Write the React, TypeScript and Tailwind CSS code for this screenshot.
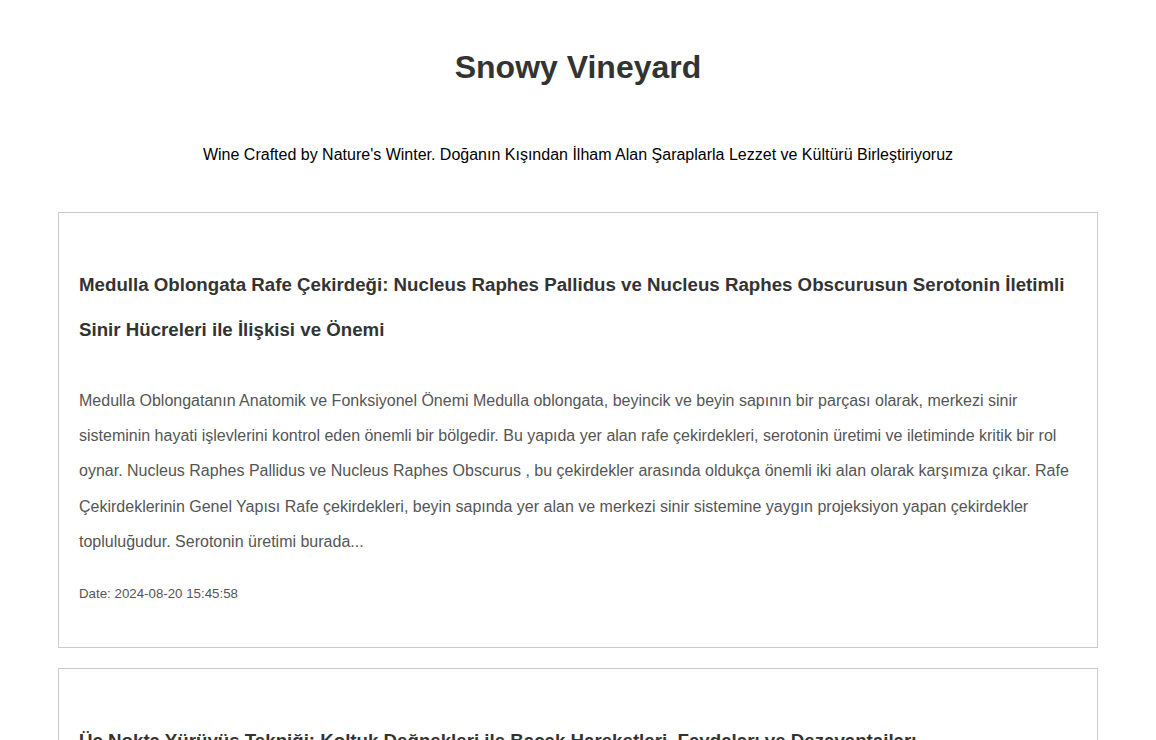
import React from "react";

const posts = [
  {
    title:
      "Medulla Oblongata Rafe Çekirdeği: Nucleus Raphes Pallidus ve Nucleus Raphes Obscurusun Serotonin İletimli Sinir Hücreleri ile İlişkisi ve Önemi",
    body:
      "Medulla Oblongatanın Anatomik ve Fonksiyonel Önemi Medulla oblongata, beyincik ve beyin sapının bir parçası olarak, merkezi sinir sisteminin hayati işlevlerini kontrol eden önemli bir bölgedir. Bu yapıda yer alan rafe çekirdekleri, serotonin üretimi ve iletiminde kritik bir rol oynar. Nucleus Raphes Pallidus ve Nucleus Raphes Obscurus , bu çekirdekler arasında oldukça önemli iki alan olarak karşımıza çıkar. Rafe Çekirdeklerinin Genel Yapısı Rafe çekirdekleri, beyin sapında yer alan ve merkezi sinir sistemine yaygın projeksiyon yapan çekirdekler topluluğudur. Serotonin üretimi burada...",
    date: "2024-08-20 15:45:58",
  },
  {
    title:
      "Üç Nokta Yürüyüş Tekniği: Koltuk Değnekleri ile Bacak Hareketleri, Faydaları ve Dezavantajları",
    body:
      "Üç nokta yürüyüş tekniği, koltuk değnekleri kullanılarak yapılan ve bir bacağın yük taşımasının kısıtlandığı durumlarda tercih edilen bir yürüyüş yöntemidir. Bu teknikte iki koltuk değneği ve etkilenen bacak birlikte hareket ettirilir...",
    date: "2024-08-19 10:12:31",
  },
];

export default function App() {
  return (
    <div
      className="min-h-screen bg-white"
      style={{ fontFamily: '"Liberation Sans", Arial, sans-serif' }}
    >
      <header className="pt-[49px] text-center">
        <h1 className="text-[32px] font-bold leading-[37px] text-[#333]">
          Snowy Vineyard
        </h1>
        <p className="mt-[60px] text-[16px] leading-[18px] text-black">
          Wine Crafted by Nature's Winter. Doğanın Kışından İlham Alan Şaraplarla Lezzet ve Kültürü Birleştiriyoruz
        </p>
      </header>
      <main className="mx-auto mt-[48px] flex w-[1040px] flex-col gap-[20px]">
        {posts.map((p) => (
          <article
            key={p.title}
            className="border border-[#cccccc] px-[20px] pt-[49px] pb-[46px]"
          >
            <h2 className="text-[18.7px] font-bold leading-[45px] text-[#333]">
              {p.title}
            </h2>
            <p className="mt-[31px] text-[16px] leading-[35.2px] text-[#555]">
              {p.body}
            </p>
            <div className="mt-[27px] text-[13.3px] leading-[15px] text-[#555]">
              Date: {p.date}
            </div>
          </article>
        ))}
      </main>
    </div>
  );
}
